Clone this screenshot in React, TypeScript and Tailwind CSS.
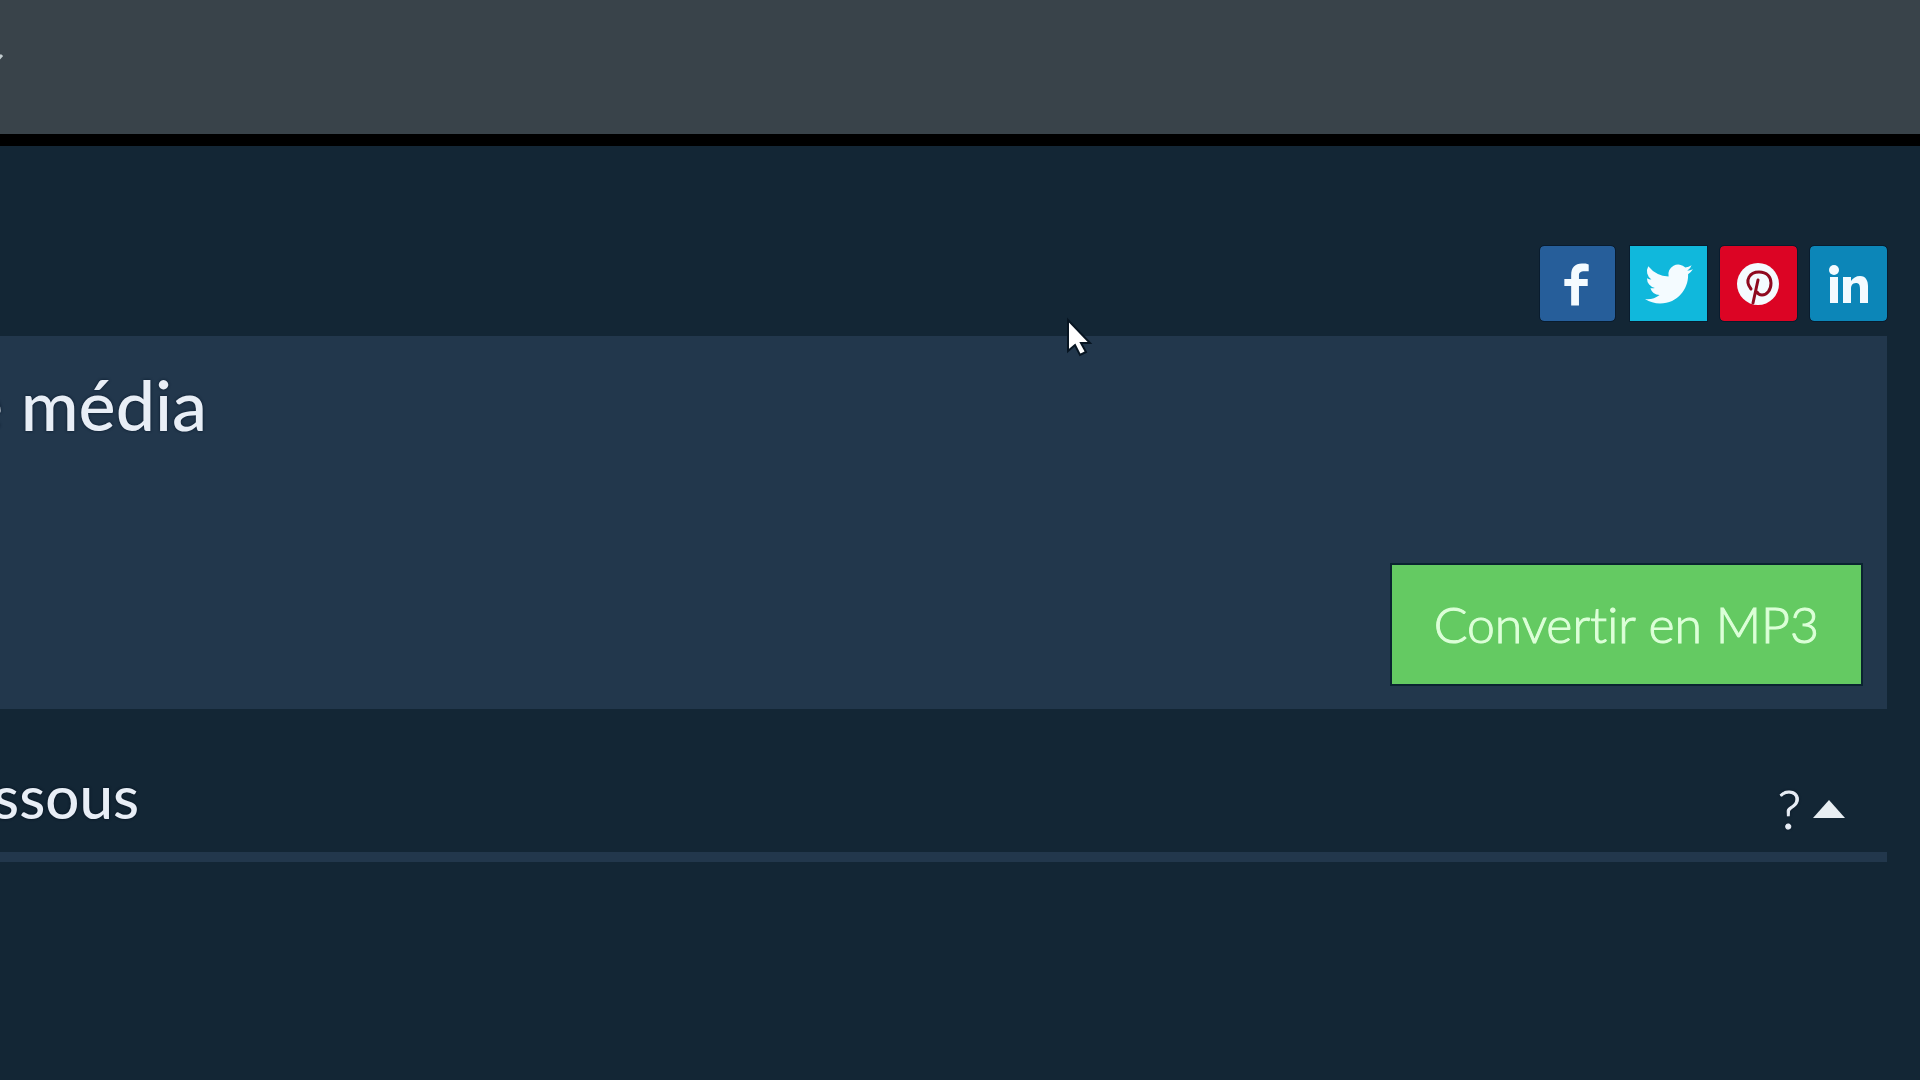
const socials = [
  {
    name: "Facebook",
    color: "mr-0.5 w-[75px] bg-[#265e9a] rounded-sm",
    icon: (
      <path d="M32 60V40h-7v-7h7v-4c0-8 4-12 11-12 3 0 5 0 7 1v7h-4c-5 0-6 2-6 4v4h9v7h-9v20z" />
    ),
  },
  {
    name: "Twitter",
    color: "w-[77px] bg-[#10b8dc]",
    icon: (
      <path
        d="M23.95 4.57a10 10 0 0 1-2.82.77 4.96 4.96 0 0 0 2.16-2.72 9.9 9.9 0 0 1-3.12 1.19 4.92 4.92 0 0 0-8.38 4.48A13.93 13.93 0 0 1 1.64 3.16 4.92 4.92 0 0 0 3.2 9.72a4.9 4.9 0 0 1-2.23-.61v.06a4.92 4.92 0 0 0 3.95 4.83 5 5 0 0 1-2.21.08 4.94 4.94 0 0 0 4.6 3.42A9.87 9.87 0 0 1 0 19.54a13.94 13.94 0 0 0 7.55 2.21c9.05 0 14-7.5 14-13.98 0-.21 0-.42-.02-.63a9.94 9.94 0 0 0 2.42-2.57z"
        transform="translate(15 14) scale(2)"
      />
    ),
  },
  {
    name: "Pinterest",
    color: "w-[77px] bg-[#dc0424] rounded-sm",
    icon: (
      <>
        <circle cx="38" cy="38" r="21" />
        <path
          d="M31 43c-7-9-1-17 8-17 8 0 12 5 12 11 0 7-4 12-9 12-3 0-4-1-5-3M38 34l-5 23"
          fill="none"
          stroke="#8f0a20"
          strokeWidth="3"
          strokeLinecap="round"
        />
      </>
    ),
  },
  {
    name: "LinkedIn",
    color: "w-[77px] bg-[#0c86b8] rounded-sm",
    icon: (
      <>
        <circle cx="24" cy="24" r="5" />
        <path d="M20 31h8v26h-8zM33 31h8v4c2-3 5-5 9-5 6 0 8 5 8 10v17h-8V43c0-4-1-6-4-6-4 0-5 3-5 6v14h-8z" />
      </>
    ),
  },
];

export default function App() {
  return (
    <div className="relative min-h-screen overflow-hidden bg-[#132635] font-['Lato',sans-serif] text-[#e8eef6]">
      <header className="flex h-[146px] items-start border-b-[12px] border-black bg-[#39434a] pt-[53px]">
        <button type="button" aria-label="Menu" className="-ml-4">
          <svg className="h-4 w-5" viewBox="0 0 20 16" fill="none" stroke="#c2cccf" strokeWidth="3">
            <path d="M2 2l8 9 8-9" />
          </svg>
        </button>
      </header>

      <main className="pr-[33px]">
        <nav aria-label="Partager" className="flex justify-end gap-[13px] pt-[100px]">
          {socials.map((s) => (
            <a key={s.name} href="#" aria-label={s.name} className={`h-[75px] outline-1 outline-[#091c2e] ${s.color}`}>
              <svg className="h-full w-full" viewBox="0 0 77 75" fill="#f4fbff">
                {s.icon}
              </svg>
            </a>
          ))}
        </nav>

        <section className="mt-[15px] flex h-[373px] flex-col justify-between bg-[#22374c] pt-[26px] pr-[26px] pb-[25px]">
          <h1 className="flex w-[207px] justify-end text-[70px] leading-[84px] font-medium whitespace-nowrap text-shadow-[0_0_3px_#07172a]">
            e média
          </h1>
          <button
            type="button"
            className="h-[119px] self-end bg-[#64ca62] px-[42px] text-[50px] font-light text-[#dcffd8] outline-2 outline-[#0a2430] [-webkit-text-stroke:1px_#dcffd8] [font-variant-ligatures:none]"
          >
            Convertir en MP3
          </button>
        </section>

        <section className="flex h-[153px] items-start justify-between border-b-[10px] border-[#22374c] pt-[47px] pr-[42px]">
          <h2 className="flex w-[139px] justify-end text-[60px] leading-[80px] font-medium text-shadow-[0_0_3px_#020f1d]">
            ssous
          </h2>
          <button
            type="button"
            aria-label="Aide"
            className="flex items-center gap-3 pt-[15px] text-[54px] leading-[76px] font-light [-webkit-text-stroke:1px_#e8eef6] text-shadow-[0_0_3px_#020f1d]"
          >
            ?
            <svg className="h-[18px] w-8" viewBox="0 0 32 18" fill="#e8eef2">
              <path d="M16 0l16 18H0z" />
            </svg>
          </button>
        </section>
      </main>

      {/* Mouse pointer */}
      <svg className="absolute top-[317px] left-[1065px] h-10 w-7" viewBox="0 0 28 40" fill="#fff" stroke="#071522" strokeWidth="2">
        <path d="M3 3v31l7-6 5 10 6-3-5-9h9z" />
      </svg>
    </div>
  );
}
